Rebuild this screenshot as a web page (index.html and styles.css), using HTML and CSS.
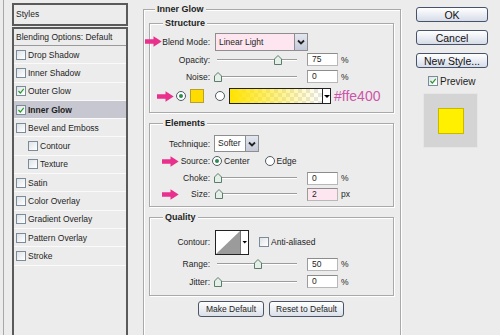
FILE: index.html
```html
<!DOCTYPE html>
<html lang="en">
<head>
    <meta charset="UTF-8">
    <meta name="viewport" content="width=device-width, initial-scale=1.0">
    <title>Layer Style</title>

    <!-- Styling -->

    <link rel="stylesheet" href="styles.css">
</head>
<body>
    <!-- shared icons -->
    <svg class="defs" width="0" height="0">
        <symbol id="arrow" viewBox="0 0 17 11"><path d="M0 3.2H8.5V0.3L16.7 5.5L8.5 10.7V7.8H0Z" fill="#e8308c"/></symbol>
        <symbol id="thumb" viewBox="0 0 8 10"><path d="M0.5 4L4 0.5L7.5 4V9.5H0.5Z" fill="#e3efe7" stroke="#5c7c6c"/></symbol>
        <symbol id="chevron" viewBox="0 0 10 8"><path d="M2 2.5L5 5.5L8 2.5" fill="none" stroke="#222" stroke-width="1.8"/></symbol>
        <symbol id="check" viewBox="0 0 10 10"><path d="M1.8 5L4.2 7.5L8.4 2.2" fill="none" stroke="#2a9a2a" stroke-width="1.5"/></symbol>
    </svg>

    <div class="dialog">

        <!-- styles list -->
        <div class="styles-col">
            <div class="styles-head">Styles</div>
            <ul class="styles-list">
                <li class="blend-row">Blending Options: Default</li>
                <li><span class="cb"></span>Drop Shadow</li>
                <li><span class="cb"></span>Inner Shadow</li>
                <li><span class="cb"><svg width="8" height="8"><use href="#check"/></svg></span>Outer Glow</li>
                <li class="active"><span class="cb"><svg width="8" height="8"><use href="#check"/></svg></span>Inner Glow</li>
                <li><span class="cb"></span>Bevel and Emboss</li>
                <li class="sub-item"><span class="cb"></span>Contour</li>
                <li class="sub-item"><span class="cb"></span>Texture</li>
                <li><span class="cb"></span>Satin</li>
                <li><span class="cb"></span>Color Overlay</li>
                <li><span class="cb"></span>Gradient Overlay</li>
                <li><span class="cb"></span>Pattern Overlay</li>
                <li><span class="cb"></span>Stroke</li>
            </ul>
        </div>

        <!-- settings -->
        <div class="main">
            <fieldset class="group outer">
                <legend>Inner Glow</legend>

                <fieldset class="group sub structure">
                    <legend>Structure</legend>
                    <div class="row blend">
                        <svg class="mark mark-out"><use href="#arrow"/></svg>
                        <span class="label">Blend Mode:</span>
                        <div class="select blend-select">
                            <span class="value">Linear Light</span>
                            <span class="drop"><svg width="10" height="8"><use href="#chevron"/></svg></span>
                        </div>
                    </div>
                    <div class="row">
                        <span class="label">Opacity:</span>
                        <div class="slider"><svg class="thumb" style="left: 75%"><use href="#thumb"/></svg></div>
                        <span class="field">75</span><span class="unit">%</span>
                    </div>
                    <div class="row">
                        <span class="label">Noise:</span>
                        <div class="slider"><svg class="thumb" style="left: 0%"><use href="#thumb"/></svg></div>
                        <span class="field">0</span><span class="unit">%</span>
                    </div>
                    <div class="row colors">
                        <svg class="mark mark-color"><use href="#arrow"/></svg>
                        <span class="radio on"></span>
                        <span class="swatch"></span>
                        <span class="radio"></span>
                        <span class="gradient"></span>
                        <span class="mini-drop"></span>
                        <span class="hex">#ffe400</span>
                    </div>
                </fieldset>

                <fieldset class="group sub elements">
                    <legend>Elements</legend>
                    <div class="row technique">
                        <span class="label">Technique:</span>
                        <div class="select tech-select">
                            <span class="value">Softer</span>
                            <span class="drop"><svg width="10" height="8"><use href="#chevron"/></svg></span>
                        </div>
                    </div>
                    <div class="row source">
                        <svg class="mark mark-in"><use href="#arrow"/></svg>
                        <span class="label">Source:</span>
                        <span class="radio on"></span><span class="opt">Center</span>
                        <span class="radio edge"></span><span class="opt">Edge</span>
                    </div>
                    <div class="row">
                        <span class="label">Choke:</span>
                        <div class="slider"><svg class="thumb" style="left: 0%"><use href="#thumb"/></svg></div>
                        <span class="field">0</span><span class="unit">%</span>
                    </div>
                    <div class="row">
                        <svg class="mark mark-in"><use href="#arrow"/></svg>
                        <span class="label">Size:</span>
                        <div class="slider"><svg class="thumb" style="left: 1%"><use href="#thumb"/></svg></div>
                        <span class="field pink">2</span><span class="unit">px</span>
                    </div>
                </fieldset>

                <fieldset class="group sub quality">
                    <legend>Quality</legend>
                    <div class="row contour-row">
                        <span class="label">Contour:</span>
                        <span class="contour">
                            <svg width="34" height="25" viewBox="0 0 34 25">
                                <rect x="0.5" y="0.5" width="33" height="24" fill="#fff" stroke="#222"/>
                                <path d="M1 24L25 1V24Z" fill="#9b9b9b"/>
                                <path d="M25.5 1V24" stroke="#777"/>
                                <path d="M27.5 11H32L29.75 13.5Z" fill="#000"/>
                            </svg>
                        </span>
                        <span class="cb aa"></span><span>Anti-aliased</span>
                    </div>
                    <div class="row range">
                        <span class="label">Range:</span>
                        <div class="slider"><svg class="thumb" style="left: 50%"><use href="#thumb"/></svg></div>
                        <span class="field">50</span><span class="unit">%</span>
                    </div>
                    <div class="row">
                        <span class="label">Jitter:</span>
                        <div class="slider"><svg class="thumb" style="left: 0%"><use href="#thumb"/></svg></div>
                        <span class="field">0</span><span class="unit">%</span>
                    </div>
                </fieldset>

                <div class="default-btns">
                    <button class="small-btn make">Make Default</button>
                    <button class="small-btn reset">Reset to Default</button>
                </div>
            </fieldset>
        </div>

        <!-- buttons and preview -->
        <div class="side">
            <button class="btn">OK</button>
            <button class="btn">Cancel</button>
            <button class="btn">New Style...</button>
            <div class="preview-toggle"><span class="cb"><svg width="8" height="8"><use href="#check"/></svg></span>Preview</div>
            <div class="preview"><div class="preview-square"></div></div>
        </div>
    </div>
</body>
</html>
```

FILE: styles.css
```css
*{
    box-sizing: border-box;
    margin: 0;
    padding: 0;
}

body{
    background-color: #ececec;
    font-family: "Liberation Sans", Arial, sans-serif;
    font-size: 8.5px;
    color: #1e1e1e;
    height: 335px;
    overflow: hidden;
}

.defs{
    position: absolute;
}

.dialog{
    display: flex;
    align-items: flex-start;
}

/* left list */

.styles-col{
    width: 125px;
    height: 335px;
    margin-left: 3px;
    padding-left: 8px;
    border-left: 1px solid #a8a8a8;
}

.styles-head{
    margin-top: 3px;
    height: 23px;
    padding-left: 2px;
    border: 2px solid #5a5a5a;
    line-height: 19px;
}

.styles-list{
    list-style: none;
    margin-top: 1px;
    height: 320px;
    border: 2px solid #5a5a5a;
}

.styles-list li{
    display: flex;
    align-items: center;
    height: 18.3px;
    padding-left: 2px;
    border-bottom: 1px solid #fafafa;
}

.styles-list .blend-row{
    height: 17px;
    border-bottom: 1px solid #9a9a9a;
}

.styles-list .active{
    background-color: #c7c7d1;
    font-weight: bold;
}

.styles-list .sub-item{
    padding-left: 14px;
}

.cb{
    display: flex;
    align-items: center;
    justify-content: center;
    width: 10px;
    height: 10px;
    margin-right: 2px;
    border: 1px solid #7b8b99;
    background: linear-gradient(135deg, #dfe3e7, #ffffff);
}

/* main panel */

.main{
    margin-left: 15px;
    margin-top: 3px;
}

.group{
    border: 1px solid #a9a9a9;
    box-shadow: inset 1px 1px 0 #fff, 1px 1px 0 #fff;
}

.group legend{
    padding: 0 2px;
    font-size: 9px;
    font-weight: bold;
    line-height: 12px;
    background-color: #ececec;
}

.outer{
    width: 258px;
    height: 345px;
    padding: 2px 6px 0 5px;
}

.outer > legend{
    margin-left: 6px;
}

.sub{
    width: 245px;
    margin-top: 4px;
}

.sub legend{
    margin-left: 13px;
}

.structure{
    margin-top: 0;
    padding-bottom: 7px;
}

.elements{
    padding-bottom: 4px;
}

.quality{
    padding-bottom: 5px;
}

.row{
    position: relative;
    display: flex;
    align-items: center;
    height: 17px;
}

.label{
    width: 60px;
    text-align: right;
}

.mark{
    position: absolute;
    top: 50%;
    width: 17px;
    height: 11px;
    margin-top: -5.5px;
}

.mark-out{ left: -5px; }
.mark-color{ left: 7px; }
.mark-in{ left: 12px; }

.structure .blend{
    margin-top: 3px;
    height: 19px;
}

.structure .colors{
    margin-top: 2px;
    height: 18px;
}

.technique{
    margin-top: 6px;
}

.source{
    height: 18px;
}

.elements .row:nth-of-type(3),
.elements .row:nth-of-type(4){
    height: 16px;
}

.contour-row{
    margin-top: 6px;
    height: 26px;
}

.range{
    height: 18px;
}

/* controls */

.select{
    display: flex;
    height: 18px;
    margin-left: 5px;
    border: 1px solid #8e8e8e;
    background-color: #fff;
}

.select .value{
    flex: 1;
    padding-left: 3px;
    line-height: 16px;
}

.drop{
    display: flex;
    align-items: center;
    justify-content: center;
    width: 13px;
    border-left: 1px solid #8e8e8e;
    background: linear-gradient(#e3e7f0, #c4cad9);
}

.blend-select{
    width: 93px;
    background-color: #fde6ef;
}

.tech-select{
    width: 45px;
    height: 17px;
    margin-left: 4px;
}

.tech-select .value{
    line-height: 15px;
}

.slider{
    position: relative;
    width: 80px;
    height: 12px;
    margin-left: 7px;
}

.slider::before{
    content: "";
    position: absolute;
    left: 0;
    right: 0;
    top: 5px;
    border-top: 1px solid #9c9c9c;
    border-bottom: 1px solid #fff;
}

.thumb{
    position: absolute;
    top: 1px;
    width: 8px;
    height: 10px;
    margin-left: -3px;
}

.field{
    width: 31px;
    height: 13px;
    margin-left: 10px;
    padding-left: 4px;
    line-height: 11px;
    background-color: #fff;
    border: 1px solid #b8b8b8;
    border-top-color: #8c8c8c;
    border-left-color: #9c9c9c;
}

.field.pink{
    background-color: #fde6ef;
}

.unit{
    margin-left: 3px;
}

.radio{
    display: flex;
    align-items: center;
    justify-content: center;
    width: 10px;
    height: 10px;
    border-radius: 50%;
    border: 1px solid #4e5a64;
    background-color: #fff;
}

.radio.on::after{
    content: "";
    width: 4px;
    height: 4px;
    border-radius: 50%;
    background-color: #2f8a4f;
}

.colors .radio.on{
    margin-left: 26px;
}

.swatch{
    width: 14px;
    height: 14px;
    margin-left: 4px;
    margin-right: 11px;
    background-color: #ffdc00;
    border: 1px solid #b8a030;
}

.gradient{
    width: 93px;
    height: 16px;
    margin-left: 4px;
    border: 1px solid #222;
    border-right: none;
    background:
        linear-gradient(to right, #ffe400 0%, rgba(255, 228, 0, 0.55) 45%, rgba(255, 228, 0, 0) 100%),
        repeating-conic-gradient(#e6e6e6 0 25%, #ffffff 0 50%) 0 0 / 8px 8px;
}

.mini-drop{
    position: relative;
    width: 9px;
    height: 16px;
    border: 1px solid #222;
    background-color: #fff;
}

.mini-drop::after{
    content: "";
    position: absolute;
    left: 1px;
    top: 6px;
    border-left: 3px solid transparent;
    border-right: 3px solid transparent;
    border-top: 3px solid #000;
}

.hex{
    margin-left: 3px;
    font-size: 14px;
    color: #cc55aa;
}

.source .radio.on{
    margin-left: 2px;
}

.opt{
    margin-left: 2px;
}

.radio.edge{
    margin-left: 15px;
}

.contour{
    display: flex;
    margin-left: 5px;
}

.cb.aa{
    margin-left: 10px;
}

.default-btns{
    display: flex;
    gap: 5px;
    margin-top: 5px;
    margin-left: 49px;
}

.small-btn{
    height: 16px;
    font: inherit;
    color: #1e1e1e;
    border: 1px solid #4a5668;
    border-radius: 3px;
    background: linear-gradient(#ffffff, #dadfe8);
}

.small-btn.make{ width: 66px; }
.small-btn.reset{ width: 75px; }

/* right side */

.side{
    width: 72px;
    margin-left: 15px;
    padding-top: 7px;
}

.btn{
    display: block;
    width: 72px;
    height: 15px;
    margin-bottom: 8px;
    font: inherit;
    font-size: 10.5px;
    color: #111;
    border: 1px solid #46536a;
    border-radius: 3px;
    background: linear-gradient(#ffffff, #d6dce8);
}

.preview-toggle{
    display: flex;
    align-items: center;
    height: 12px;
    margin-top: -1px;
    padding-left: 12px;
    font-size: 10px;
}

.preview{
    display: flex;
    align-items: center;
    justify-content: center;
    width: 55px;
    height: 55px;
    margin-top: 6px;
    margin-left: 7px;
    background-color: #d4d4d4;
    border: 1px solid #e6e6e6;
}

.preview-square{
    width: 26px;
    height: 26px;
    background-color: #fff000;
    border: 1px solid #c9b800;
}
```
